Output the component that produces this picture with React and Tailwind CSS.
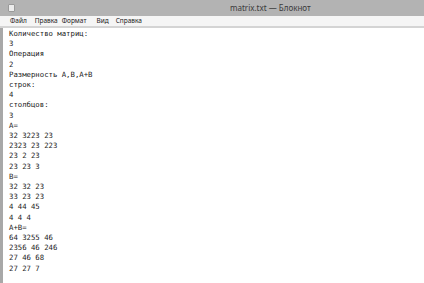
export default function App() {
  const lines = [
    "Количество матриц:",
    "3",
    "Операция",
    "2",
    "Размерность A,B,A+B",
    "строк:",
    "4",
    "столбцов:",
    "3",
    "A=",
    "32 3223 23",
    "2323 23 223",
    "23 2 23",
    "23 23 3",
    "B=",
    "32 32 23",
    "33 23 23",
    "4 44 45",
    "4 4 4",
    "A+B=",
    "64 3255 46",
    "2356 46 246",
    "27 46 68",
    "27 27 7",
  ];
  const menu = [
    ["Файл", "ml-[10px]"],
    ["Правка", "ml-[8px]"],
    ["Формат", "ml-[4px]"],
    ["Вид", "ml-[10px]"],
    ["Справка", "ml-[7px]"],
  ];

  return (
    <div className="w-[424px] h-[283px] overflow-hidden flex flex-col bg-white">
      {/* title bar */}
      <div className="h-[16px] shrink-0 bg-[#b3b3b3] flex items-center relative">
        <div className="absolute left-[8px] top-[4px] w-[7px] h-[8px] bg-[#ececec] border border-[#9a9a9a] rounded-[1px]" />
        <span
          className="ml-[230px] text-[8px] leading-none text-[#3a3a3a]"
          style={{ fontFamily: '"Noto Sans", "Liberation Sans", sans-serif' }}
        >
          matrix.txt — Блокнот
        </span>
      </div>
      {/* menu bar */}
      <div
        className="h-[10px] shrink-0 bg-[#f5f5f5] flex items-center text-[6.5px] leading-none text-[#222]"
        style={{ fontFamily: '"Noto Sans", "Liberation Sans", sans-serif' }}
      >
        {menu.map(([label, cls]) => (
          <span key={label} className={cls}>
            {label}
          </span>
        ))}
      </div>
      <div className="h-[2px] shrink-0 bg-[#d4d4d4]" />
      {/* editor */}
      <div className="flex flex-1 min-h-0">
        <div className="w-[3px] bg-[#a8a8a8] shrink-0" />
        <div
          className="pl-[6px] pt-[1px] text-[7.3px] leading-[10.2px] text-[#1a1a1a]"
          style={{ fontFamily: '"DejaVu Sans Mono", monospace' }}
        >
          {lines.map((l, i) => (
            <div key={i} className="whitespace-pre">
              {l}
            </div>
          ))}
        </div>
      </div>
    </div>
  );
}
